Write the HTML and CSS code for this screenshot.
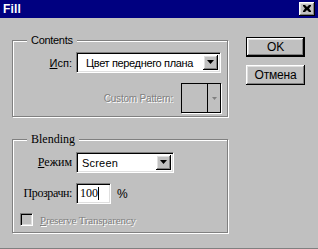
FILE: index.html
```html
<!DOCTYPE html>
<html>
<head>
<meta charset="utf-8">
<link rel="stylesheet" href="styles.css">
</head>
<body>
<div class="window">
  <div class="titlebar">
    <span class="title">Fill</span>
    <div class="close">
      <svg width="8" height="7" viewBox="0 0 8 7"><path d="M0 0h2l2 2 2-2h2v1L6 3.5 8 6v1H6L4 5 2 7H0V6l2-2.5L0 1z" fill="#000"/></svg>
    </div>
  </div>
  <div class="body">
    <div class="left">
      <div class="group contents">
        <span class="legend">Contents</span>
        <div class="row use-row">
          <span class="label"><u>И</u>сп:</span>
          <div class="combo combo-use">
            <span class="combo-text">Цвет переднего плана</span>
            <span class="drop"><svg width="7" height="4" viewBox="0 0 7 4"><path d="M0 0h7L3.5 4z" fill="#000"/></svg></span>
          </div>
        </div>
        <div class="row pattern-row">
          <span class="label disabled sans">Custom Pattern:</span>
          <div class="pattern">
            <span class="pattern-drop"><svg width="5" height="3" viewBox="0 0 5 3"><path d="M0 0h5L2.5 3z" fill="#808080"/></svg></span>
          </div>
        </div>
      </div>
      <div class="group blending">
        <span class="legend serif">Blending</span>
        <div class="row mode-row">
          <span class="label serif"><u>Р</u>ежим</span>
          <div class="combo combo-mode">
            <span class="combo-text narrow">Screen</span>
            <span class="drop"><svg width="7" height="4" viewBox="0 0 7 4"><path d="M0 0h7L3.5 4z" fill="#000"/></svg></span>
          </div>
        </div>
        <div class="row opacity-row">
          <span class="label serif">Прозрачн:</span>
          <div class="field"><span class="field-text">100</span><span class="caret"></span></div>
          <span class="unit">%</span>
        </div>
        <div class="check-row">
          <span class="checkbox"></span>
          <span class="disabled serif"><u>P</u>reserve Transparency</span>
        </div>
      </div>
    </div>
    <div class="right">
      <div class="btn default"><span>OK</span></div>
      <div class="btn"><span>Отмена</span></div>
    </div>
  </div>
</div>
</body>
</html>
```

FILE: styles.css
```css
* { box-sizing: border-box; }
html, body {
  margin: 0;
  padding: 0;
  background: #c0c0c0;
}
body {
  width: 318px;
  height: 249px;
  overflow: hidden;
  font-family: "Liberation Sans", Arial, sans-serif;
  font-size: 11px;
  color: #000;
}
.window {
  width: 318px;
  height: 249px;
  border-bottom: 1px solid #808080;
  display: flex;
  flex-direction: column;
}
.titlebar {
  height: 18px;
  background: #000080;
  display: flex;
  align-items: center;
  justify-content: space-between;
  padding: 0 3px 0 3px;
}
.title {
  color: #fff;
  font-weight: bold;
  font-size: 12px;
  letter-spacing: 0.2px;
}
.close {
  width: 16px;
  height: 14px;
  background: #c0c0c0;
  box-shadow: inset -1px -1px #000, inset 1px 1px #fff, inset -2px -2px #808080, inset 2px 2px #dfdfdf;
  display: flex;
  align-items: center;
  justify-content: center;
  padding: 0 1px 1px 0;
}
.close svg { display: block; }
.body {
  display: flex;
  align-items: flex-start;
  padding: 19px 0 0 12px;
}
.left {
  margin-top: 3px;
  width: 217px;
  display: flex;
  flex-direction: column;
  gap: 22px;
}
.group {
  position: relative;
  width: 216px;
  border: 1px solid #808080;
  box-shadow: inset 1px 1px #fff, 1px 1px #fff;
}
.contents { height: 77px; padding: 11px 0 0 0; }
.blending { height: 94px; padding: 12px 0 0 0; }
.legend {
  position: absolute;
  top: -7px;
  left: 14px;
  padding: 0 4px;
  background: #c0c0c0;
  line-height: 13px;
  letter-spacing: -0.3px;
}
.serif { font-family: "Liberation Serif", "Times New Roman", serif; font-size: 12px; letter-spacing: 0; }
.sans { font-family: "Liberation Sans", Arial, sans-serif; }
.row {
  display: flex;
  align-items: center;
}
.label {
  width: 59px;
  text-align: right;
  margin-right: 4px;
  white-space: nowrap;
}
.use-row .label { font-size: 11px; }
.opacity-row .label { letter-spacing: -0.4px; }
.combo {
  height: 21px;
  background: #fff;
  border-top: 1px solid #808080;
  border-left: 1px solid #808080;
  border-right: 1px solid #fff;
  border-bottom: 1px solid #fff;
  box-shadow: inset 1px 1px #000, inset -1px -1px #dfdfdf;
  display: flex;
  align-items: center;
  justify-content: space-between;
  padding: 2px 2px 2px 9px;
}
.combo-mode { padding-left: 5px; }
.combo-use { width: 145px; }
.combo-mode { width: 98px; }
.combo-text { font-size: 11px; letter-spacing: -0.35px; white-space: nowrap; }
.narrow { letter-spacing: 0.2px; font-family: "Liberation Sans", Arial, sans-serif; font-size: 11px; }
.drop {
  width: 15px;
  height: 15px;
  background: #c0c0c0;
  box-shadow: inset -1px -1px #000, inset 1px 1px #fff, inset -2px -2px #808080, inset 2px 2px #dfdfdf;
  display: flex;
  align-items: center;
  justify-content: center;
  padding: 0 1px 1px 0;
}
.drop svg { display: block; }
.pattern-row { margin-top: 10px; justify-content: flex-end; padding-right: 6px; }
.pattern-row .label { width: auto; margin-right: 8px; font-size: 10px; letter-spacing: -0.2px; }
.disabled {
  color: #808080;
  text-shadow: 1px 1px #fff;
}
.pattern {
  width: 40px;
  height: 30px;
  border: 1px solid #000;
  box-shadow: 1px 1px #fff;
  display: flex;
  justify-content: flex-end;
}
.pattern-drop {
  width: 13px;
  border-left: 1px solid #000;
  display: flex;
  align-items: center;
  justify-content: center;
}
.pattern-drop svg { display: block; }
.opacity-row { margin-top: 10px; }
.field {
  width: 35px;
  height: 21px;
  background: #fff;
  border-top: 1px solid #808080;
  border-left: 1px solid #808080;
  border-right: 1px solid #fff;
  border-bottom: 1px solid #fff;
  box-shadow: inset 1px 1px #000, inset -1px -1px #dfdfdf;
  display: flex;
  align-items: center;
  padding: 0 0 0 3px;
  font-family: "Liberation Serif", serif;
  font-size: 12px;
}
.caret {
  width: 1px;
  height: 13px;
  background: #000;
  margin-left: 0;
}
.unit { margin-left: 6px; font-size: 12px; }
.check-row {
  display: flex;
  align-items: center;
  margin: 9px 0 0 7px;
  gap: 7px;
}
.check-row .disabled { font-size: 11px; letter-spacing: -0.2px; }
.checkbox {
  width: 13px;
  height: 13px;
  background: #c0c0c0;
  border-top: 1px solid #808080;
  border-left: 1px solid #808080;
  border-right: 1px solid #fff;
  border-bottom: 1px solid #fff;
  box-shadow: inset 1px 1px #000, inset -1px -1px #dfdfdf;
}
.right {
  margin-left: 17px;
  display: flex;
  flex-direction: column;
  gap: 8px;
}
.btn {
  width: 59px;
  height: 20px;
  background: #c0c0c0;
  box-shadow: inset -1px -1px #000, inset 1px 1px #fff, inset -2px -2px #808080, inset 2px 2px #dfdfdf;
  display: flex;
  align-items: center;
  justify-content: center;
  font-size: 12px;
  letter-spacing: -0.2px;
}
.btn.default {
  border: 1px solid #000;
}
```
